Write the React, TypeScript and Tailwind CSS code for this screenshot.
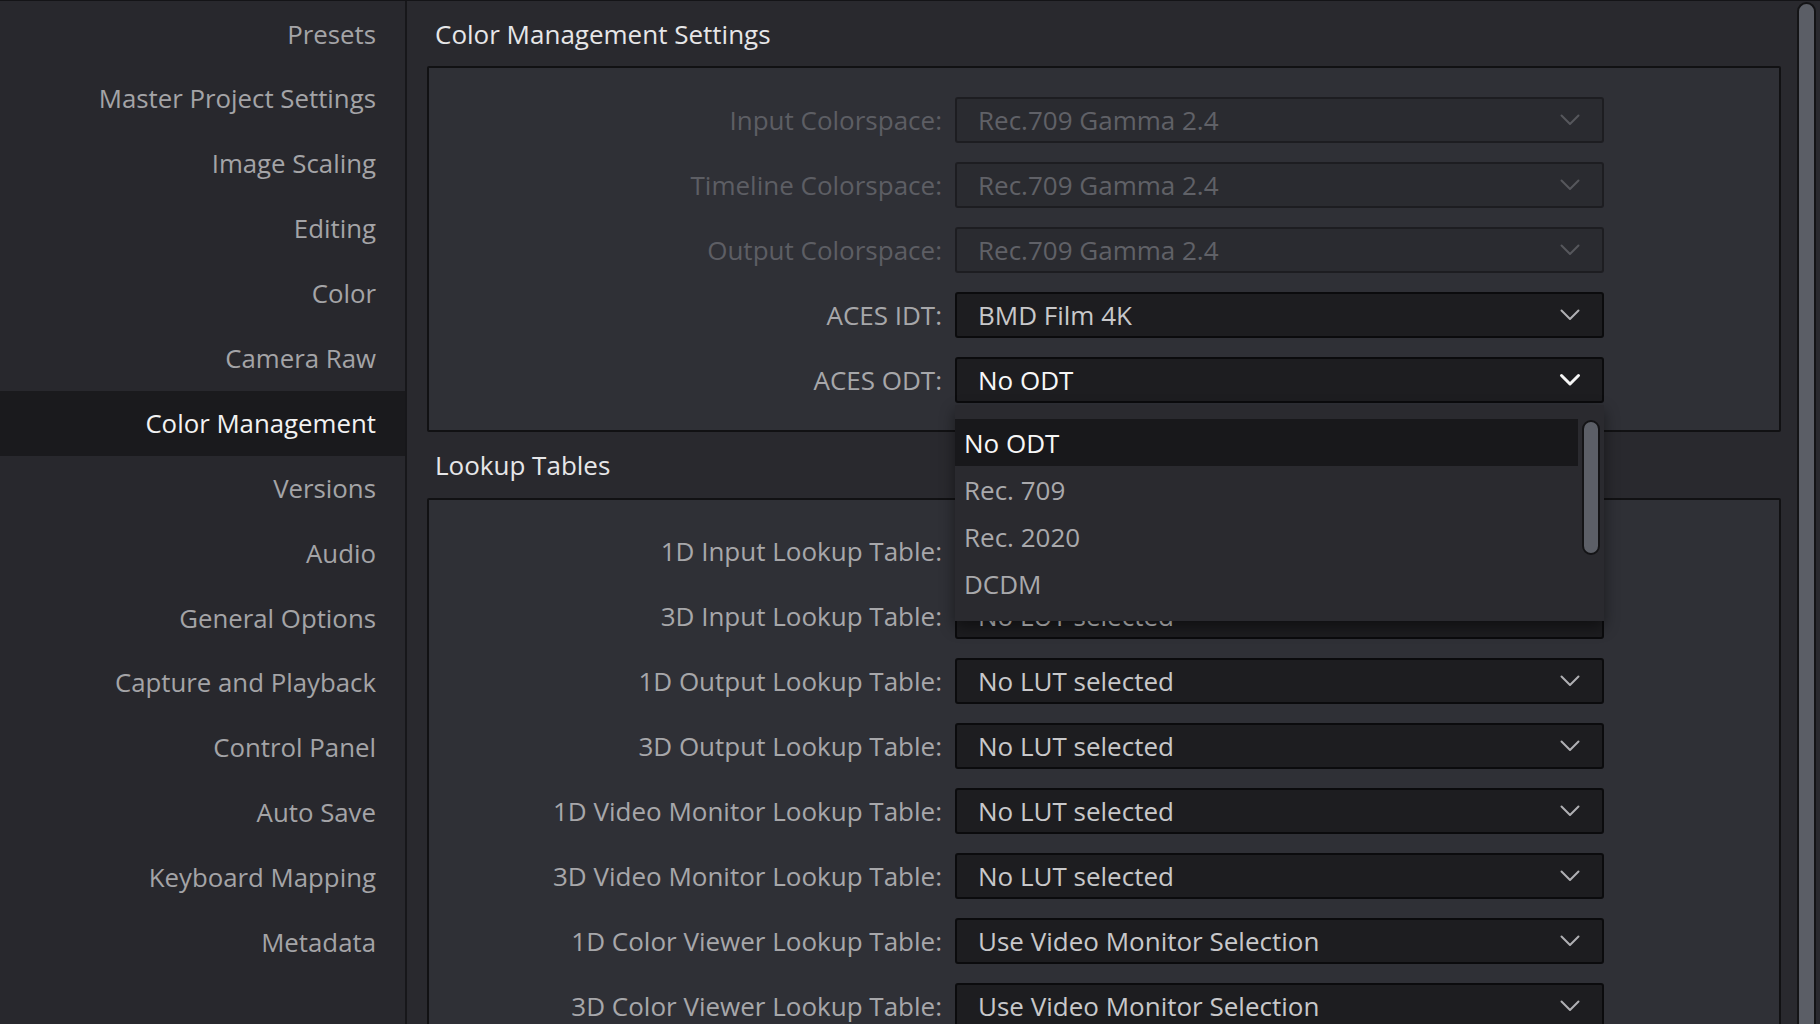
import React from "react";

const sidebarItems = [
  "Presets",
  "Master Project Settings",
  "Image Scaling",
  "Editing",
  "Color",
  "Camera Raw",
  "Color Management",
  "Versions",
  "Audio",
  "General Options",
  "Capture and Playback",
  "Control Panel",
  "Auto Save",
  "Keyboard Mapping",
  "Metadata",
];

type Row = {
  label: string;
  value: string;
  state: "disabled" | "active" | "focused";
  popup?: boolean;
};

const colorRows: Row[] = [
  { label: "Input Colorspace:", value: "Rec.709 Gamma 2.4", state: "disabled" },
  { label: "Timeline Colorspace:", value: "Rec.709 Gamma 2.4", state: "disabled" },
  { label: "Output Colorspace:", value: "Rec.709 Gamma 2.4", state: "disabled" },
  { label: "ACES IDT:", value: "BMD Film 4K", state: "active" },
  { label: "ACES ODT:", value: "No ODT", state: "focused", popup: true },
];

const lutRows: Row[] = [
  { label: "1D Input Lookup Table:", value: "No LUT selected", state: "active" },
  { label: "3D Input Lookup Table:", value: "No LUT selected", state: "active" },
  { label: "1D Output Lookup Table:", value: "No LUT selected", state: "active" },
  { label: "3D Output Lookup Table:", value: "No LUT selected", state: "active" },
  { label: "1D Video Monitor Lookup Table:", value: "No LUT selected", state: "active" },
  { label: "3D Video Monitor Lookup Table:", value: "No LUT selected", state: "active" },
  { label: "1D Color Viewer Lookup Table:", value: "Use Video Monitor Selection", state: "active" },
  { label: "3D Color Viewer Lookup Table:", value: "Use Video Monitor Selection", state: "active" },
];

function Chevron({ color, width }: { color: string; width: number }) {
  return (
    <svg width="22" height="14" viewBox="0 0 22 14" fill="none">
      <path
        d="M2.5 2.5 L11 11 L19.5 2.5"
        stroke={color}
        strokeWidth={width}
        strokeLinecap="round"
        strokeLinejoin="round"
      />
    </svg>
  );
}

function Popup() {
  const items = ["No ODT", "Rec. 709", "Rec. 2020", "DCDM"];
  return (
    <div className="absolute left-0 top-[calc(100%+2px)] z-10 w-full h-[216px] overflow-hidden bg-[#2a2a2f] pt-[14px] shadow-[0_6px_14px_rgba(0,0,0,0.45)]">
      <div className="flex flex-col w-[623px]">
        {items.map((it, i) => (
          <div
            key={it}
            className={
              i === 0
                ? "h-[47px] flex items-center pl-[9px] bg-[#18181b] text-[#f7f7f7]"
                : "h-[47px] flex items-center pl-[9px] text-[#a9a9ac]"
            }
          >
            {it}
          </div>
        ))}
      </div>
      <div className="absolute right-[4px] top-[15px] w-[18px] h-[135px] rounded-full bg-[#5c5f67] border-2 border-[#141416]" />
    </div>
  );
}

function FormRow({ row }: { row: Row }) {
  const labelColor = row.state === "disabled" ? "text-[#5d5e64]" : "text-[#a7a7aa]";
  const boxClass =
    row.state === "disabled"
      ? "bg-[#2a2b30] border-[#1d1d21] text-[#606167]"
      : row.state === "focused"
      ? "bg-[#1d1d20] border-[#0b0b0d] text-[#f7f7f7]"
      : "bg-[#1d1d20] border-[#0b0b0d] text-[#c8c8ca]";
  const chevColor =
    row.state === "disabled" ? "#56575c" : row.state === "focused" ? "#f5f5f5" : "#b0b0b3";
  const chevWidth = row.state === "focused" ? 3 : 2;
  return (
    <div className="flex items-center h-[46px]">
      <div className={`w-[513px] text-right whitespace-nowrap ${labelColor}`}>{row.label}</div>
      <div className="relative ml-[13px]">
        <div
          className={`w-[649px] h-[46px] rounded-[3px] border-2 flex items-center justify-between pl-[21px] pr-[21px] ${boxClass}`}
        >
          <span className="whitespace-nowrap">{row.value}</span>
          <Chevron color={chevColor} width={chevWidth} />
        </div>
        {row.popup ? <Popup /> : null}
      </div>
    </div>
  );
}

export default function App() {
  return (
    <div
      className="w-[1820px] h-[1024px] overflow-hidden flex bg-[#29292e] border-t border-[#141417] text-[26px] leading-none"
      style={{ fontFamily: "'Open Sans', 'Noto Sans', sans-serif" }}
    >
      {/* Sidebar */}
      <div className="w-[407px] shrink-0 h-full bg-[#28282d] border-r-2 border-[#17171a] flex flex-col pt-[1px] text-[25.8px]">
        {sidebarItems.map((item) => (
          <div
            key={item}
            className={
              item === "Color Management"
                ? "h-[64.9px] shrink-0 flex items-center justify-end pr-[29px] bg-[#1a1a1d] text-[#f2f2f2]"
                : "h-[64.9px] shrink-0 flex items-center justify-end pr-[29px] text-[#a4a4a7]"
            }
          >
            {item}
          </div>
        ))}
      </div>

      {/* Content */}
      <div className="flex-1 min-w-0 flex flex-col pl-[20px] pr-[16px]">
        <div className="h-[65px] shrink-0 flex items-center pl-[8px] text-[#e6e6e8]">
          Color Management Settings
        </div>
        <div className="shrink-0 border-2 border-[#111113] rounded-[2px] bg-[#2f3036] pt-[29px] pb-[27px] flex flex-col gap-[19px]">
          {colorRows.map((r) => (
            <FormRow key={r.label} row={r} />
          ))}
        </div>
        <div className="h-[66px] shrink-0 flex items-center pl-[8px] text-[#e6e6e8]">
          Lookup Tables
        </div>
        <div className="shrink-0 border-2 border-[#111113] rounded-[2px] bg-[#2f3036] pt-[28px] pb-[30px] flex flex-col gap-[19px]">
          {lutRows.map((r) => (
            <FormRow key={r.label} row={r} />
          ))}
        </div>
      </div>

      {/* Scrollbar */}
      <div className="w-[23px] shrink-0 h-full pt-[1px] pr-[4px]">
        <div className="w-[19px] h-[1100px] rounded-t-full bg-[#5b5e66] border-2 border-[#141416]" />
      </div>
    </div>
  );
}
